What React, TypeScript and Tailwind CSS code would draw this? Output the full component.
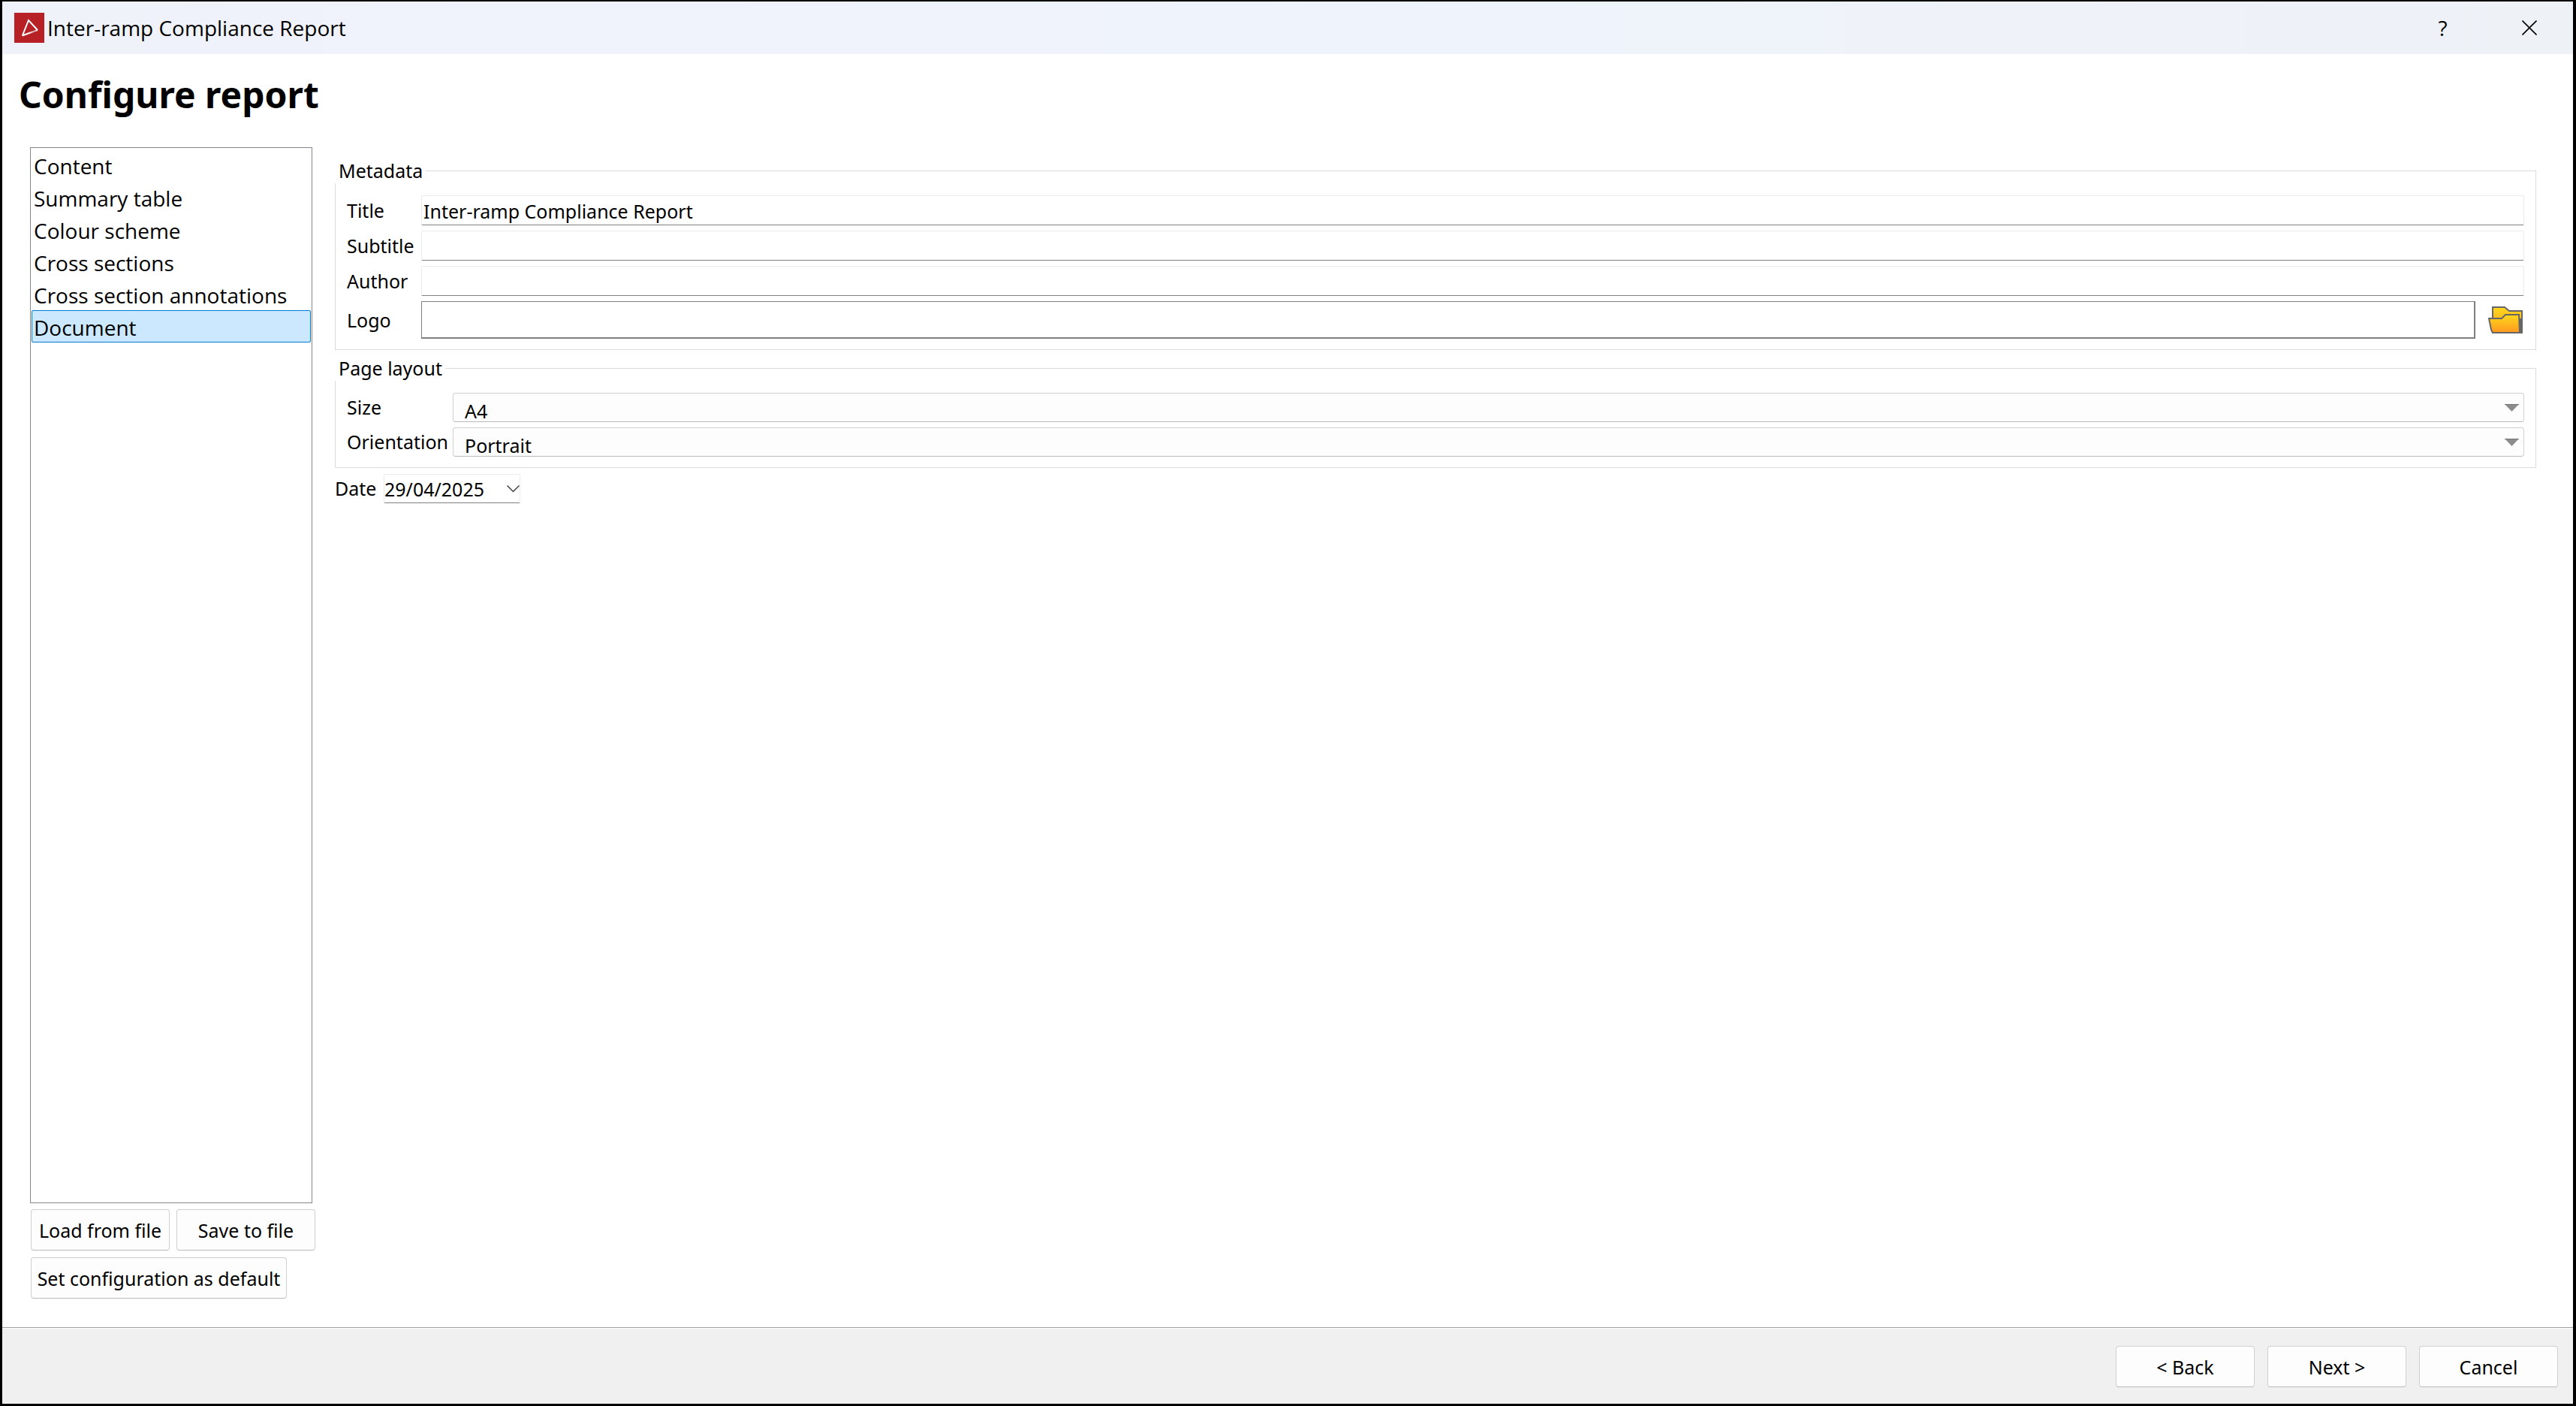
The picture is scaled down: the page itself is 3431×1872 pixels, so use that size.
import { useState } from "react";

const sections = [
  "Content",
  "Summary table",
  "Colour scheme",
  "Cross sections",
  "Cross section annotations",
  "Document",
];

const buttonStyle =
  "h-[55px] whitespace-nowrap rounded-[4px] border border-[#d0d0d0] border-b-[#bababa] bg-[#fdfdfd] pt-0.5 hover:bg-[#f5f5f5]";
const inputStyle =
  "h-10 w-full rounded-[2px] border border-[#ebebeb] border-b-[#808080] bg-white px-0.5 pt-0.5 outline-none";

const TitleBar = () => {
  return (
    <header className="flex h-[70px] shrink-0 items-center bg-linear-to-r from-[#f0f2fa] via-[#eff3fb] to-[#eef2f7] pr-px pl-4 font-['Open_Sans',sans-serif] text-[28px]">
      <svg className="size-10" viewBox="0 0 40 40" fill="none">
        <defs>
          <linearGradient id="edge" gradientUnits="userSpaceOnUse" x1="11" y1="30" x2="31" y2="23">
            <stop offset="0.4" stopColor="#fff" />
            <stop offset="0.8" stopColor="#c99" />
            <stop offset="1" stopColor="#fff" />
          </linearGradient>
        </defs>
        <rect width="40" height="40" fill="#b72025" />
        <path d="M31 23 L19 10 L11 30" stroke="#fff" strokeWidth="2" />
        <path d="M10.500 30.500 L31 23" stroke="url(#edge)" strokeWidth="2" />
      </svg>
      <span className="ml-1">Inter-ramp Compliance Report</span>
      <div className="ml-auto flex h-full">
        <button className="w-[115px]" aria-label="Help">
          ?
        </button>
        <button
          className="flex w-[115px] items-center justify-center"
          aria-label="Close"
        >
          <svg className="size-5" viewBox="0 0 20 20">
            <path d="M0.5 0.5 L19.5 19.5 M19.5 0.5 L0.5 19.5" stroke="#000" strokeWidth="1.6" />
          </svg>
        </button>
      </div>
    </header>
  );
};

const Sidebar = () => {
  const [selected, setSelected] = useState("Document");

  return (
    <aside className="flex w-[380px] shrink-0 flex-col">
      <ul className="w-[376px] grow border border-[#828790] p-px font-['Open_Sans',sans-serif] text-[28px] leading-[37px]">
        {sections.map((section) => (
          <li key={section}>
            <button
              className={
                section === selected
                  ? "block w-full rounded-[2px] border border-[#0078d4] bg-[#cce8ff] px-0.5 pt-1 text-left"
                  : "block w-full border border-transparent px-0.5 pt-1 text-left"
              }
              onClick={() => setSelected(section)}
            >
              {section}
            </button>
          </li>
        ))}
      </ul>
      <div className="mt-2 flex flex-wrap gap-[9px] pl-px">
        <button className={`${buttonStyle} w-[185px]`}>Load from file</button>
        <button className={`${buttonStyle} w-[185px]`}>Save to file</button>
        <button className={`${buttonStyle} w-[341px]`}>
          Set configuration as default
        </button>
      </div>
    </aside>
  );
};

const Group = ({ title, children }: { title: string; children: React.ReactNode }) => {
  return (
    <fieldset className="border border-[#dcdcdc] px-[15px] pt-4 pb-[14px]">
      <legend className="-ml-4 bg-white pr-1 pl-[5px]">{title}</legend>
      {children}
    </fieldset>
  );
};

const Select = ({ id, options }: { id: string; options: string[] }) => {
  return (
    <div className="relative">
      <select
        id={id}
        className="block h-[39px] w-full appearance-none rounded-[4px] border border-[#d0d0d0] border-b-[#bababa] bg-[#fdfdfd] pt-2 pl-[15px] leading-[30px] outline-none"
      >
        {options.map((option) => (
          <option key={option}>{option}</option>
        ))}
      </select>
      <svg
        className="pointer-events-none absolute top-[15px] right-[7px] h-[10px] w-[19px]"
        viewBox="0 0 19 10"
      >
        <path d="M0 0 H19 L9.5 10 Z" fill="#8c8c8c" />
        <path d="M0 0.5 H19" stroke="#757575" />
      </svg>
    </div>
  );
};

const FolderIcon = () => {
  return (
    <svg className="h-9 w-[46px]" viewBox="0 0 46 36">
      <defs>
        <linearGradient id="folder" x1="0" y1="0" x2="0" y2="1">
          <stop offset="0" stopColor="#ffd91c" />
          <stop offset="1" stopColor="#ff981f" />
        </linearGradient>
      </defs>
      <g stroke="#666" strokeWidth="2">
        <path d="M6 35 V1 H22 L28 6 H45 V35 Z" fill="url(#folder)" />
        <path d="M43 16 L44 35 H42 Z" fill="#666" />
        <path d="M1 16 H18 L23 11 H41 L42 35 H6 L4 31 Z" fill="url(#folder)" />
      </g>
    </svg>
  );
};

const DocumentForm = () => {
  return (
    <form className="flex min-w-0 grow flex-col gap-2 pt-[15px]">
      <Group title="Metadata">
        <div className="grid grid-cols-[99px_1fr] items-center gap-y-[7px]">
          <label htmlFor="title">Title</label>
          <input
            id="title"
            className={inputStyle}
            defaultValue="Inter-ramp Compliance Report"
          />
          <label htmlFor="subtitle">Subtitle</label>
          <input id="subtitle" className={inputStyle} />
          <label htmlFor="author">Author</label>
          <input id="author" className={inputStyle} />
          <label htmlFor="logo">Logo</label>
          <div className="flex items-center">
            <input
              id="logo"
              className="h-[50px] min-w-0 grow border border-r-2 border-b-2 border-[#7f7f7f] px-0.5 outline-none"
            />
            <button type="button" className="mr-0.5 ml-[17px]" aria-label="Browse">
              <FolderIcon />
            </button>
          </div>
        </div>
      </Group>
      <Group title="Page layout">
        <div className="grid grid-cols-[141px_1fr] items-center gap-y-[7px]">
          <label htmlFor="size">Size</label>
          <Select id="size" options={["A4", "A3", "Letter"]} />
          <label htmlFor="orientation">Orientation</label>
          <Select id="orientation" options={["Portrait", "Landscape"]} />
        </div>
      </Group>
      <div className="flex items-center">
        <label htmlFor="date" className="w-[65px]">
          Date
        </label>
        <div className="relative w-[182px]">
          <input
            id="date"
            className="block h-[39px] w-full rounded-[2px] border border-[#ebebeb] border-b-[#808080] outline-none"
            defaultValue="29/04/2025"
          />
          <svg
            className="pointer-events-none absolute top-[15px] right-px h-[10px] w-[17px]"
            viewBox="0 0 17 10"
            fill="none"
          >
            <path d="M0.500 0.500 L8.500 8.500 L16.500 0.500" stroke="#444" strokeWidth="1.5" />
          </svg>
        </div>
      </div>
    </form>
  );
};

export default function App() {
  return (
    <div className="flex h-screen flex-col border-[3px] border-t-2 border-r-4 border-black bg-white font-['Noto_Sans',sans-serif] text-[25px] leading-[33px] text-black">
      <TitleBar />
      <h1 className="pt-[18px] pl-[22px] text-[48px] leading-[72px] font-bold">
        Configure report
      </h1>
      <main className="flex min-h-0 grow gap-[26px] pt-[34px] pr-[49px] pb-[38px] pl-[37px]">
        <Sidebar />
        <DocumentForm />
      </main>
      <footer className="flex shrink-0 justify-end gap-[17px] border-t border-[#a0a0a0] bg-[#f0f0f0] pt-6 pr-5 pb-[22px] shadow-[inset_0_1px_#fff]">
        <button className={`${buttonStyle} w-[185px]`}>&lt; Back</button>
        <button className={`${buttonStyle} w-[185px]`}>Next &gt;</button>
        <button className={`${buttonStyle} w-[185px]`}>Cancel</button>
      </footer>
    </div>
  );
}
